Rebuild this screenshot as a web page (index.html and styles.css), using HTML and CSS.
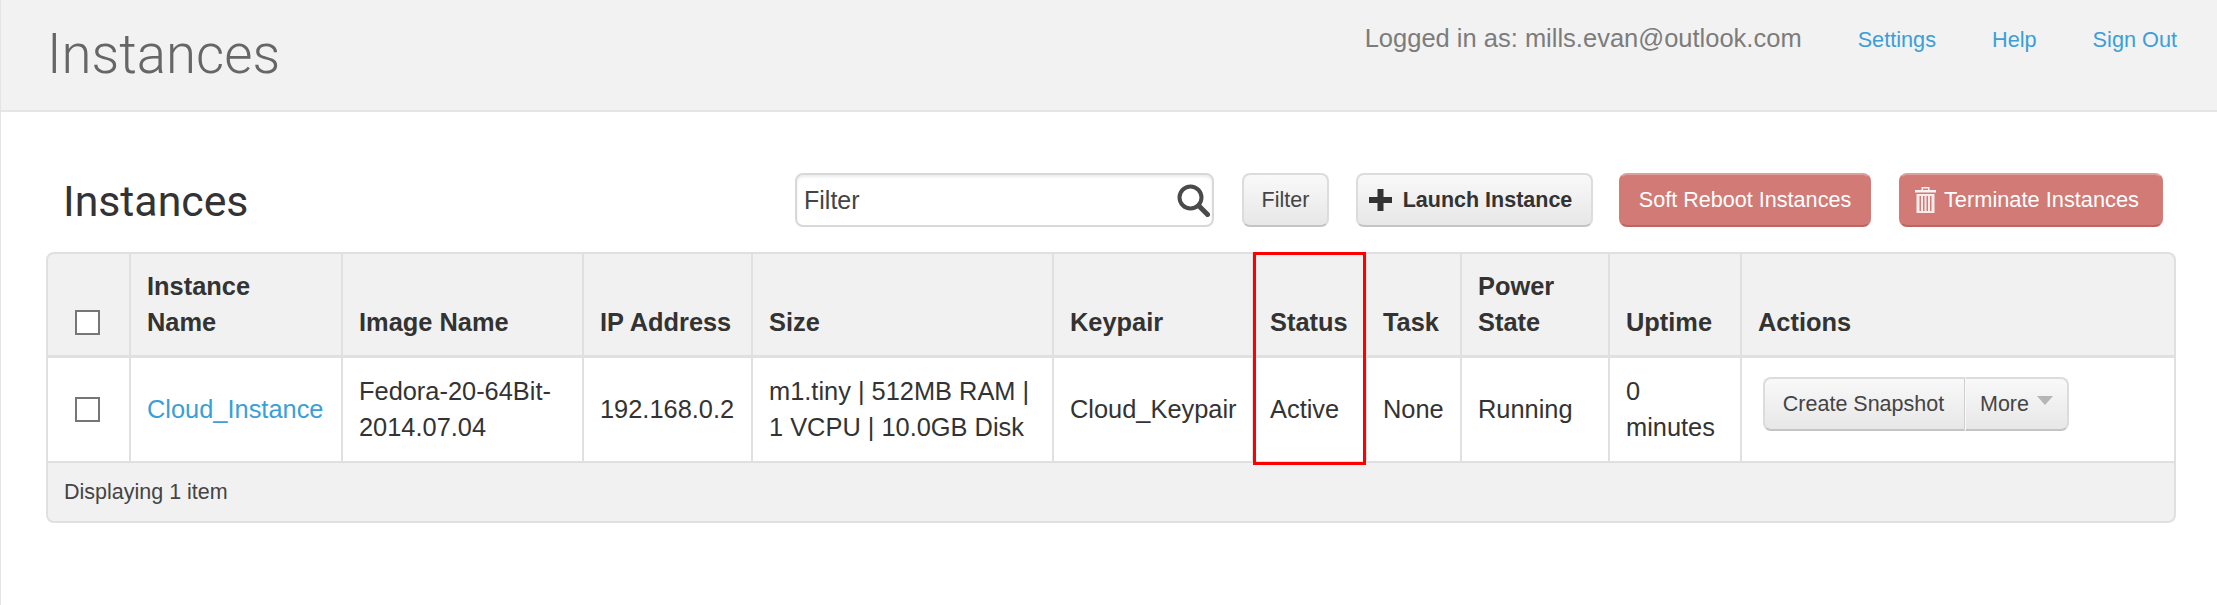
FILE: index.html
```html
<!DOCTYPE html>
<html lang="en">
<head>
<meta charset="utf-8">
<title>Instances</title>
<link rel="stylesheet" href="styles.css">
</head>
<body>
<header class="topbar">
  <h1 class="page-title">Instances</h1>
  <nav class="user-nav">
    <span class="user-info">Logged in as: mills.evan@outlook.com</span>
    <a class="nav-link settings" href="#">Settings</a>
    <a class="nav-link help" href="#">Help</a>
    <a class="nav-link" href="#">Sign Out</a>
  </nav>
</header>
<main class="content">
  <div class="toolbar">
    <h2 class="table-title">Instances</h2>
    <div class="actions">
      <div class="search">
        <span class="search-text">Filter</span>
        <svg class="search-icon" viewBox="0 0 33 33" aria-hidden="true"><circle cx="13.5" cy="13.5" r="11" fill="none" stroke="#4a4a4a" stroke-width="4"/><path d="M22 22l8.500 8.500" stroke="#4a4a4a" stroke-width="5" stroke-linecap="round"/></svg>
      </div>
      <button class="btn btn-filter">Filter</button>
      <button class="btn btn-launch"><svg class="plus" viewBox="0 0 23 22" aria-hidden="true"><path d="M8.500 0h6v8H23v6h-8.500v8h-6v-8H0V8h8.500z" fill="#333"/></svg>Launch Instance</button>
      <button class="btn btn-danger btn-reboot">Soft Reboot Instances</button>
      <button class="btn btn-danger btn-terminate"><svg class="trash" viewBox="0 0 21 26" aria-hidden="true"><path d="M0 3h21v2.500H0zM6.500 0h8v3H13V1.500H8V3H6.500z" fill="#fff" fill-opacity=".9"/><path d="M1.500 7h18v19h-18zM4.500 9v15h1.500V9zM8 9v15h1.500V9zM11.500 9v15H13V9zM15 9v15h1.500V9z" fill="#fff" fill-opacity=".85" fill-rule="evenodd"/></svg>Terminate Instances</button>
    </div>
  </div>
  <div class="table-wrap">
    <table class="instances">
      <colgroup>
        <col class="c1"><col class="c2"><col class="c3"><col class="c4"><col class="c5"><col class="c6"><col class="c7"><col class="c8"><col class="c9"><col class="c10"><col class="c11">
      </colgroup>
      <thead>
        <tr>
          <th class="check"><span class="checkbox"></span></th>
          <th>Instance<br>Name</th>
          <th>Image Name</th>
          <th>IP Address</th>
          <th>Size</th>
          <th>Keypair</th>
          <th>Status</th>
          <th>Task</th>
          <th>Power State</th>
          <th>Uptime</th>
          <th>Actions</th>
        </tr>
      </thead>
      <tbody>
        <tr>
          <td class="check"><span class="checkbox"></span></td>
          <td><a class="link" href="#">Cloud_Instance</a></td>
          <td>Fedora-20-64Bit-2014.07.04</td>
          <td>192.168.0.2</td>
          <td>m1.tiny | 512MB RAM | 1 VCPU | 10.0GB Disk</td>
          <td>Cloud_Keypair</td>
          <td>Active</td>
          <td>None</td>
          <td>Running</td>
          <td>0 minutes</td>
          <td class="row-actions">
            <div class="btn-group">
              <button class="btn btn-snapshot">Create Snapshot</button>
              <button class="btn btn-more">More<span class="caret"></span></button>
            </div>
          </td>
        </tr>
      </tbody>
      <tfoot>
        <tr><td class="footer" colspan="11">Displaying 1 item</td></tr>
      </tfoot>
    </table>
    <div class="highlight"></div>
  </div>
</main>
</body>
</html>
```
FILE: styles.css
```css
* { box-sizing: border-box; }
html, body { margin: 0; padding: 0; }
body {
  width: 2217px;
  height: 605px;
  overflow: hidden;
  background: #fff;
  border-left: 1px solid #e4e4e4;
  font-family: "Liberation Sans", Arial, sans-serif;
  color: #333;
}
.topbar {
  height: 112px;
  background: #f2f2f2;
  border-bottom: 2px solid #e5e5e5;
  display: flex;
  justify-content: space-between;
  align-items: flex-start;
  padding: 0 40px 0 46px;
}
.page-title {
  margin: 24px 0 0;
  font: 300 54.600px/60px Roboto, sans-serif;
  color: #666;
}
.user-nav {
  display: flex;
  align-items: baseline;
  padding-top: 24px;
}
.user-info { font-size: 25.500px; line-height: 28px; color: #7c7c7c; margin-right: 56px; }
.nav-link { font-size: 21.700px; color: #3a9fd8; text-decoration: none; }
.settings, .help { margin-right: 56px; }
.content { padding: 0 38px 0 45px; }
.toolbar {
  height: 140px;
  display: flex;
  justify-content: space-between;
  align-items: flex-start;
  padding-top: 61px;
}
.table-title {
  margin: 3px 0 0 17px;
  font: 400 42.800px/50px Roboto, sans-serif;
  color: #333;
}
.actions { display: flex; margin-right: 16px; }
.search {
  width: 419px;
  height: 54px;
  background: #fff;
  border: 2px solid #d8d8d8;
  border-radius: 8px;
  box-shadow: inset 0 2px 3px rgba(0,0,0,.08);
  display: flex;
  justify-content: space-between;
  align-items: center;
  padding: 0 2px 0 7px;
  margin-right: 28px;
}
.search-text { font-size: 25px; color: #444; }
.search-icon { width: 33px; height: 33px; }
.btn {
  height: 54px;
  padding: 0;
  font: 21.500px "Liberation Sans", Arial, sans-serif;
  color: #444;
  background: linear-gradient(#f9f9f9, #e7e7e7);
  border: 2px solid #dcdcdc;
  border-bottom-color: #c4c4c4;
  border-radius: 8px;
  display: inline-flex;
  align-items: center;
  justify-content: center;
}
.btn-filter { width: 87px; margin-right: 27px; }
.btn-launch { width: 237px; margin-right: 26px; padding-right: 8px; font-weight: 700; color: #333; }
.plus { width: 23px; height: 22px; margin-right: 11px; }
.btn-danger {
  background: #d27a76;
  border-color: #d27a76;
  border-top-color: #dd9f9c;
  border-bottom-color: #bd6561;
  color: #fff;
  font-size: 21.600px;
}
.btn-reboot { width: 252px; margin-right: 28px; }
.btn-terminate { width: 264px; padding-right: 8px; font-size: 21.800px; }
.trash { width: 21px; height: 26px; margin-right: 8px; }
.table-wrap {
  position: relative;
  width: 2130px;
  height: 271px;
  background: #f1f1f1;
  border: 2px solid #e0e0e0;
  border-radius: 8px;
}
.instances {
  width: 2126px;
  table-layout: fixed;
  border-collapse: collapse;
  font-size: 25.400px;
  line-height: 36px;
}
.c1 { width: 82px; }
.c2 { width: 212px; }
.c3 { width: 241px; }
.c4 { width: 169px; }
.c5 { width: 301px; }
.c6 { width: 200px; }
.c7 { width: 113px; }
.c8 { width: 95px; }
.c9 { width: 148px; }
.c10 { width: 132px; }
.instances th {
  height: 102px;
  vertical-align: bottom;
  text-align: left;
  padding: 0 16px 15px;
  font-weight: 700;
  color: #333;
  border-right: 2px solid #e0e0e0;
  border-bottom: 3px solid #e0e0e0;
}
.instances tbody td {
  height: 106px;
  background: #fff;
  padding: 0 16px;
  border-right: 2px solid #e0e0e0;
  border-bottom: 2px solid #e0e0e0;
  vertical-align: middle;
}
.instances th:last-child, .instances tbody td:last-child { border-right: 0; }
.instances .check { padding: 0 0 0 27px; vertical-align: middle; }
.instances th.check { vertical-align: bottom; padding-bottom: 20px; }
.checkbox {
  display: block;
  width: 25px;
  height: 25px;
  background: #fff;
  border: 2px solid #767676;
}
.link { color: #3a9fd8; text-decoration: none; }
.row-actions.row-actions { padding: 0 0 10px 21px; vertical-align: middle; }
.btn-group { display: flex; }
.btn-snapshot { width: 202px; padding-right: 2px; border-radius: 8px 0 0 8px; border-right: 1px solid #cfcfcf; }
.btn-more { width: 104px; border-radius: 0 8px 8px 0; border-left: 1px solid #fafafa; }
.caret {
  width: 0;
  height: 0;
  margin: -8px 0 0 8px;
  border-left: 8px solid transparent;
  border-right: 8px solid transparent;
  border-top: 9px solid #b5b5b5;
}
.instances .footer {
  height: 59px;
  padding: 0 16px;
  font-size: 21.500px;
  line-height: 30px;
  color: #444;
}
.highlight {
  position: absolute;
  left: 1205px;
  top: -2px;
  width: 113px;
  height: 213px;
  border: 3px solid #f00;
  pointer-events: none;
}
```
